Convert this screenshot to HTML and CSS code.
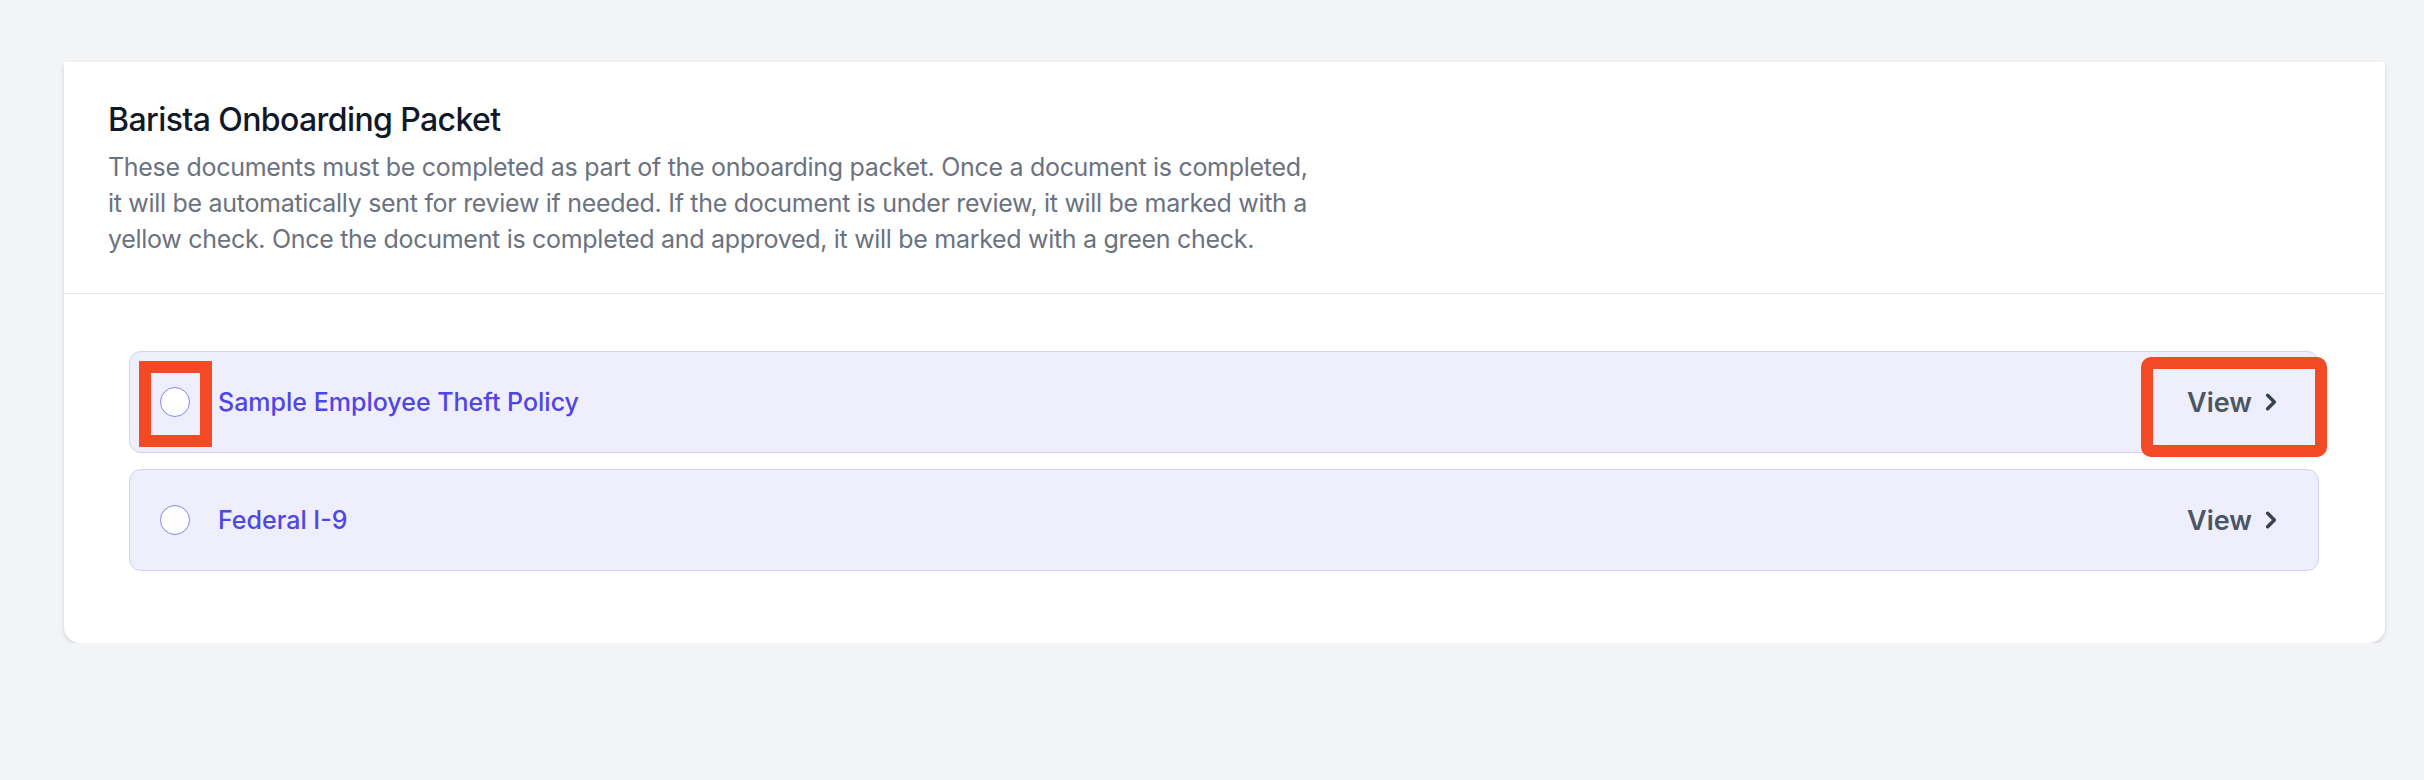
FILE: index.html
```html
<!DOCTYPE html>
<html lang="en">
<head>
<meta charset="utf-8">
<title>Barista Onboarding Packet</title>
<link rel="stylesheet" href="styles.css">
</head>
<body>
<main class="page">
  <section class="card">
    <header class="card-header">
      <h3 class="card-title">Barista Onboarding Packet</h3>
      <p class="card-desc">These documents must be completed as part of the onboarding packet. Once a document is completed, it will be automatically sent for review if needed. If the document is under review, it will be marked with a yellow check. Once the document is completed and approved, it will be marked with a green check.</p>
    </header>
    <div class="card-body">
      <ul class="doc-list">
        <li class="doc-row">
          <span class="radio highlight highlight-radio"></span>
          <span class="doc-name">Sample Employee Theft Policy</span>
          <span class="view highlight highlight-view">View
            <svg class="chev" viewBox="0 0 20 20" fill="none" stroke="currentColor" stroke-width="2" stroke-linecap="round" stroke-linejoin="round" aria-hidden="true"><polyline points="8 6 12 10 8 14"/></svg>
          </span>
        </li>
        <li class="doc-row">
          <span class="radio"></span>
          <span class="doc-name">Federal I-9</span>
          <span class="view">View
            <svg class="chev" viewBox="0 0 20 20" fill="none" stroke="currentColor" stroke-width="2" stroke-linecap="round" stroke-linejoin="round" aria-hidden="true"><polyline points="8 6 12 10 8 14"/></svg>
          </span>
        </li>
      </ul>
    </div>
  </section>
</main>
</body>
</html>
```

FILE: styles.css
```css
* { box-sizing: border-box; }

html, body {
  margin: 0;
  padding: 0;
  background: #f3f4f6;
  font-family: Inter, "Noto Sans", "Liberation Sans", sans-serif;
}

.page {
  padding: 62px 39px 0 64px;
}

.card {
  background: #ffffff;
  border-radius: 0 0 16px 16px;
  box-shadow: 0 2px 5px rgba(0, 0, 0, 0.1), 0 2px 4px -2px rgba(0, 0, 0, 0.1);
}

.card-header {
  padding: 36px 44px 36px 44px;
  border-bottom: 1px solid #e5e7eb;
}

.card-title {
  margin: 0 0 7px 0;
  font-size: 32px;
  line-height: 44px;
  font-weight: 500;
  letter-spacing: -0.6px;
  color: #111827;
}

.card-desc {
  margin: 0;
  max-width: 1212px;
  font-size: 25px;
  line-height: 36px;
  letter-spacing: -0.3px;
  color: #6b7280;
}

.card-body {
  padding: 57px 66px 72px 65px;
}

.doc-list {
  list-style: none;
  margin: 0;
  padding: 0;
  display: flex;
  flex-direction: column;
  gap: 16px;
}

.doc-row {
  display: flex;
  align-items: center;
  height: 102px;
  padding: 0 30px;
  background: #efeefc;
  border: 1px solid #d2d0f8;
  border-radius: 12px;
}

.radio {
  flex: none;
  width: 30px;
  height: 30px;
  border-radius: 50%;
  background: #ffffff;
  border: 1px solid #8385f2;
}

.doc-name {
  margin-left: 28px;
  flex: 1;
  font-size: 25px;
  font-weight: 500;
  color: #4f46e5;
}

.view {
  display: flex;
  align-items: center;
  height: 36px;
  font-size: 27px;
  font-weight: 600;
  color: #4b5563;
}

.chev {
  width: 34px;
  height: 34px;
  margin-left: 2px;
  color: #374151;
}

.highlight {
  position: relative;
}

.highlight::after {
  content: "";
  position: absolute;
  border: 12px solid #f34a25;
  pointer-events: none;
}

.highlight-radio::after {
  left: -22px;
  right: -23px;
  top: -27px;
  bottom: -31px;
}

.highlight-view::after {
  left: -46px;
  right: -39px;
  top: -27px;
  bottom: -37px;
  border-radius: 10px;
}
```
